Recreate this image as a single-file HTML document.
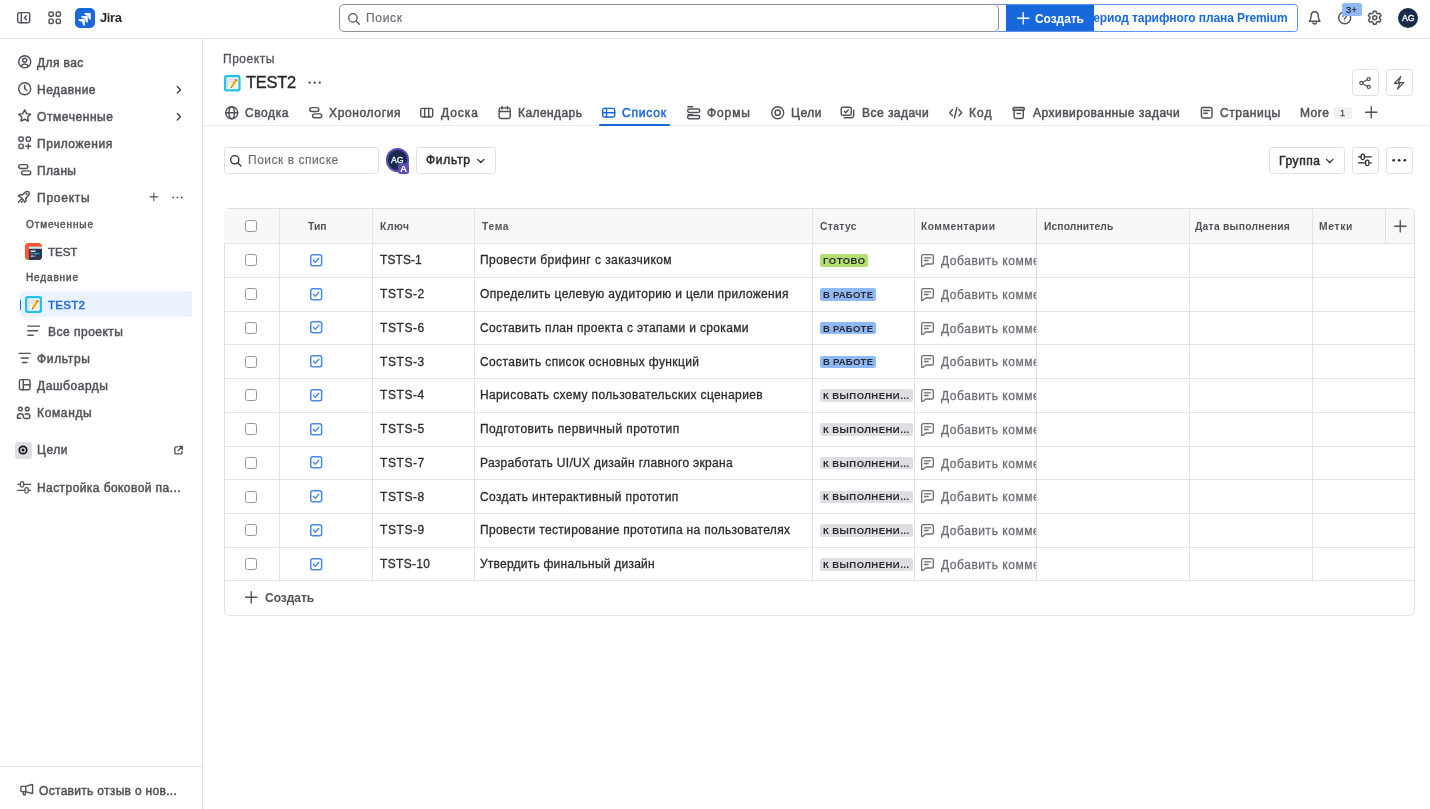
<!DOCTYPE html>
<html lang="ru">
<head>
<meta charset="utf-8">
<title>TEST2 - Список - Jira</title>
<style>
*{box-sizing:border-box;margin:0;padding:0}
html,body{width:1430px;height:809px;overflow:hidden;background:#fff}
body{font-family:"Liberation Sans",sans-serif;font-size:13px;color:#292a2e;position:relative}
svg{display:block;overflow:visible}
.abs{position:absolute}
.t{position:absolute;white-space:nowrap;will-change:transform}
.ic{position:absolute;fill:none;stroke-linecap:round;stroke-linejoin:round}
.btn{position:absolute;border:1px solid #dfe0e3;border-radius:3.5px;background:#fff}
.vl{position:absolute;width:1px;background:#e2e3e5}
.hl{position:absolute;height:1px;background:#e2e3e5}
.cb{position:absolute;width:12px;height:12px;border:1px solid #94979f;border-radius:2.5px;background:#fff}
.st{position:absolute;left:820px;height:12.5px;border-radius:2.5px}
</style>
</head>
<body>

<header class="abs" style="left:0;top:0;width:1430px;height:39px;border-bottom:1px solid #e2e3e5;background:#fff"></header>
<svg class="ic" style="left:16.05px;top:10.05px;stroke:#505258;stroke-width:1.5;" width="15.4" height="15.4" viewBox="0 0 16 16"><rect x="1.75" y="2.75" width="12.5" height="10.5" rx="1.75"/><path d="M5.5 2.75v10.5M10.75 6 8.75 8l2 2"/></svg>
<svg class="ic" style="left:47.05px;top:10.3px;stroke:#505258;stroke-width:1.5;" width="15.4" height="15.4" viewBox="0 0 16 16"><rect x="2" y="2" width="4.5" height="4.5" rx="1.6"/><rect x="9.5" y="2" width="4.5" height="4.5" rx="1.6"/><rect x="2" y="9.5" width="4.5" height="4.5" rx="1.6"/><rect x="9.5" y="9.5" width="4.5" height="4.5" rx="1.6"/></svg>
<svg class="abs" style="left:75px;top:8px" width="20" height="20" viewBox="0 0 24 24"><rect width="24" height="24" rx="6" fill="#1868db"/><path fill="#fff" transform="translate(12 12) scale(1.08) translate(-12 -12)" d="M9.05 15.99H7.81c-1.86 0-3.2-1.14-3.2-2.81h6.64c.340 0 .570.24.570.59v6.68c-1.66 0-2.77-1.34-2.77-3.21zm3.28-3.32h-1.24c-1.86 0-3.2-1.12-3.2-2.79h6.64c.340 0 .590.22.590.57v6.68c-1.66 0-2.79-1.34-2.79-3.21zm3.3-3.29h-1.24c-1.86 0-3.2-1.14-3.2-2.81h6.64c.340 0 .570.24.570.57v6.68c-1.66 0-2.77-1.34-2.77-3.21z"/></svg>
<div class="t" id="t1" style="left:99.5px;top:9px;font-size:13px;line-height:17px;color:#292a2e;font-weight:700;letter-spacing:-0.38px;">Jira</div>
<div class="abs" style="left:994px;top:4px;width:304px;height:27.5px;border:1.5px solid #5a94ef;border-radius:3.5px;background:#fff"></div>
<div class="abs" style="left:998.5px;top:6px;width:289px;height:24px;overflow:hidden"><div class="t" id="t2" style="left:-0.5px;top:4px;font-size:12px;line-height:16px;color:#1868db;font-weight:700;letter-spacing:-0.107px;left:auto;right:0;">Пробный период тарифного плана Premium</div></div>
<div class="abs" style="left:339px;top:4px;width:660px;height:27.5px;border:1px solid #8c8f97;border-radius:5px;background:#fff"></div>
<svg class="ic" style="left:346.65px;top:11.65px;stroke:#505258;stroke-width:1.5;" width="13.5" height="13.5" viewBox="0 0 16 16"><circle cx="7" cy="7" r="5"/><path d="M10.75 10.75 14.5 14.5"/></svg>
<div class="t" id="t3" style="left:365.5px;top:10px;font-size:12px;line-height:16px;color:#6b6e76;letter-spacing:0.684px;-webkit-text-stroke:0.2px #6b6e76;">Поиск</div>
<div class="abs" style="left:1006px;top:4.5px;width:87.5px;height:26.5px;background:#1868db"></div>
<svg class="ic" style="left:1015.75px;top:10.75px;stroke:#fff;stroke-width:1.5;" width="14.5" height="14.5" viewBox="0 0 16 16"><path d="M8 1.75v12.5M1.75 8h12.5"/></svg>
<div class="t" id="t4" style="left:1034.5px;top:11px;font-size:12px;line-height:16px;color:#fff;font-weight:700;letter-spacing:-0.06px;">Создать</div>
<svg class="ic" style="left:1307.1px;top:10.2px;stroke:#505258;stroke-width:1.5;" width="15.4" height="15.4" viewBox="0 0 16 16"><path d="M2.5 11.75c1.25-1.5 1.75-2.5 1.75-5.25C4.25 3.75 5.75 1.75 8 1.75s3.75 2 3.75 4.75c0 2.75.500 3.75 1.75 5.25z"/><path d="M6 13.5l2 1.25 2-1.25"/></svg>
<svg class="ic" style="left:1337.3px;top:9.9px;stroke:#505258;stroke-width:1.5;color:#505258;" width="15.4" height="15.4" viewBox="0 0 16 16"><circle cx="8" cy="8" r="6.25"/><path d="M6.25 6.5c0-1 .750-1.75 1.75-1.75s1.75.700 1.75 1.6c0 1.4-1.75 1.4-1.75 2.9"/><circle cx="8" cy="11.4" r=".600" fill="currentColor" stroke="none"/></svg>
<div class="abs" style="left:1342px;top:3px;width:19.5px;height:12.5px;border-radius:2px;background:#8fb8f6"></div>
<div class="t" id="t5" style="left:1346.1px;top:4px;font-size:9.3px;line-height:12px;color:#292a2e;letter-spacing:0.4px;-webkit-text-stroke:0.28px #292a2e;">3+</div>
<svg class="ic" style="left:1367.3px;top:10.1px;stroke:#505258;stroke-width:1.5;" width="15.4" height="15.4" viewBox="0 0 16 16"><path d="M6.6 1.75h2.8l.450 2 1.35.800 1.95-.620 1.4 2.42-1.5 1.4v1.5l1.5 1.4-1.4 2.42-1.95-.620-1.35.800-.450 2H6.6l-.450-2-1.35-.800-1.95.620-1.4-2.42 1.5-1.4v-1.5l-1.5-1.4 1.4-2.42 1.95.620 1.35-.800z" transform="translate(0,-.5)"/><circle cx="8" cy="8" r="2.1"/></svg>
<div class="abs" style="left:1397.5px;top:7.5px;width:20px;height:20px;border-radius:50%;background:#172b4d"></div>
<div class="t" id="t6" style="left:1401.5px;top:12px;font-size:8.8px;line-height:12px;color:#fff;letter-spacing:-0.1px;-webkit-text-stroke:0.35px #fff;">AG</div>
<nav class="abs" style="left:0;top:39px;width:203px;height:770px;border-right:1px solid #dfe0e2;background:#fff"></nav>
<svg class="ic" style="left:16.5px;top:54.4px;stroke:#505258;stroke-width:1.5;" width="15.4" height="15.4" viewBox="0 0 16 16"><circle cx="8" cy="8" r="6.25"/><circle cx="8" cy="6.5" r="2.1"/><path d="M4.2 12.7c.700-1.5 2.1-2.3 3.8-2.3s3.1.800 3.8 2.3"/></svg>
<div class="t" id="t7" style="left:37px;top:55px;font-size:12px;line-height:16px;color:#505258;letter-spacing:0.404px;-webkit-text-stroke:0.48px #505258;">Для вас</div>
<svg class="ic" style="left:16.5px;top:81.4px;stroke:#505258;stroke-width:1.5;" width="15.4" height="15.4" viewBox="0 0 16 16"><circle cx="8" cy="8" r="6.25"/><path d="M8 4.5V8l2.25 1.75"/></svg>
<div class="t" id="t8" style="left:37px;top:82px;font-size:12px;line-height:16px;color:#505258;letter-spacing:0.48px;-webkit-text-stroke:0.48px #505258;">Недавние</div>
<svg class="ic" style="left:172.75px;top:83.75px;stroke:#3b3d42;stroke-width:1.8;" width="11.5" height="11.5" viewBox="0 0 16 16"><path d="M6 3.5 10.5 8 6 12.5"/></svg>
<svg class="ic" style="left:16.5px;top:108.4px;stroke:#505258;stroke-width:1.5;" width="15.4" height="15.4" viewBox="0 0 16 16"><path d="M8 1.9l1.9 3.95 4.3.600-3.15 3 .780 4.3L8 11.7l-3.83 2.05.780-4.3-3.15-3 4.3-.600z"/></svg>
<div class="t" id="t9" style="left:37px;top:109px;font-size:12px;line-height:16px;color:#505258;letter-spacing:0.573px;-webkit-text-stroke:0.48px #505258;">Отмеченные</div>
<svg class="ic" style="left:172.75px;top:110.75px;stroke:#3b3d42;stroke-width:1.8;" width="11.5" height="11.5" viewBox="0 0 16 16"><path d="M6 3.5 10.5 8 6 12.5"/></svg>
<svg class="ic" style="left:16.5px;top:135.3px;stroke:#505258;stroke-width:1.5;" width="15.4" height="15.4" viewBox="0 0 16 16"><rect x="2" y="2" width="4.5" height="4.5" rx="1.6"/><rect x="9.5" y="2" width="4.5" height="4.5" rx="1.6"/><rect x="2" y="9.5" width="4.5" height="4.5" rx="1.6"/><path d="M11.75 9.25v5M9.25 11.75h5"/></svg>
<div class="t" id="t10" style="left:37px;top:136px;font-size:12px;line-height:16px;color:#505258;letter-spacing:0.553px;-webkit-text-stroke:0.48px #505258;">Приложения</div>
<svg class="ic" style="left:16.5px;top:162.4px;stroke:#505258;stroke-width:1.5;" width="15.4" height="15.4" viewBox="0 0 16 16"><rect x="1.75" y="2.75" width="9.5" height="4" rx="2"/><rect x="4.75" y="9.25" width="9.5" height="4" rx="2"/></svg>
<div class="t" id="t11" style="left:37px;top:163px;font-size:12px;line-height:16px;color:#505258;letter-spacing:0.359px;-webkit-text-stroke:0.48px #505258;">Планы</div>
<div class="t" id="t12" style="left:37px;top:190px;font-size:12px;line-height:16px;color:#505258;letter-spacing:0.757px;-webkit-text-stroke:0.48px #505258;">Проекты</div>
<svg class="ic" style="left:148.9px;top:192.35px;stroke:#505258;stroke-width:1.8;" width="9.7" height="9.7" viewBox="0 0 16 16"><path d="M8 1.75v12.5M1.75 8h12.5"/></svg>
<svg class="ic" style="left:171.3px;top:190.8px;stroke:#505258;stroke-width:0;color:#44464b;" width="12.8" height="12.8" viewBox="0 0 16 16"><circle cx="2.75" cy="8" r="1.15" fill="currentColor" stroke="none"/><circle cx="8" cy="8" r="1.15" fill="currentColor" stroke="none"/><circle cx="13.25" cy="8" r="1.15" fill="currentColor" stroke="none"/></svg>
<div class="t" id="t13" style="left:25.5px;top:218px;font-size:10px;line-height:13px;color:#505258;letter-spacing:0.885px;-webkit-text-stroke:0.42px #505258;">Отмеченные</div>
<svg class="abs" style="left:25.3px;top:242.7px" width="17" height="17" viewBox="0 0 17 17"><rect width="17" height="17" rx="3.5" fill="#ff5630"/><path d="M4 3.5h13v10c0 1.9-1.6 3.5-3.5 3.5H4z" fill="#253858"/><rect x="4" y="3.5" width="13" height="2.3" fill="#dfe1e6"/><rect x="5.5" y="7.5" width="5" height="1.3" fill="#fff"/><rect x="5.5" y="10" width="2.5" height="1.3" fill="#ff5630"/><rect x="8.8" y="10" width="5.5" height="1.3" fill="#00b8d9"/><rect x="5.5" y="12.5" width="3.5" height="1.3" fill="#c1c7d0"/><rect x="9.8" y="12.5" width="1.5" height="1.3" fill="#ff5630"/></svg>
<div class="t" id="t14" style="left:47.8px;top:245px;font-size:11.6px;line-height:14px;color:#505258;letter-spacing:-0.08px;-webkit-text-stroke:0.48px #505258;">TEST</div>
<div class="t" id="t15" style="left:25.5px;top:271px;font-size:10px;line-height:13px;color:#505258;letter-spacing:0.864px;-webkit-text-stroke:0.42px #505258;">Недавние</div>
<div class="abs" style="left:20.3px;top:290.8px;width:171.4px;height:26.7px;border-radius:3.5px;background:#e9f2fe"></div>
<div class="abs" style="left:20.3px;top:299.5px;width:1.2px;height:10.5px;border-radius:1px;background:#1868db"></div>
<svg class="abs" style="left:25.4px;top:295.8px" width="17" height="17" viewBox="0 0 17 17"><rect width="17" height="17" rx="2.5" fill="#22c3e6"/><rect x="2.3" y="2.3" width="12.4" height="12.4" rx=".8" fill="#f4f5f7"/><path d="M4 3.2v10.6" stroke="#a5adba" stroke-width="1" stroke-dasharray="1 1"/><path d="M5.5 4.5h5M5.5 6.5h4" stroke="#c1c7d0" stroke-width=".8"/><path d="M11.8 3.8l2 1.3-4.6 7.2-2.4 1.3.400-2.6z" fill="#ffab00"/><path d="M11.8 3.8l2 1.3-.9 1.4-2-1.3z" fill="#ff5630"/><path d="M6.8 13.6l.250-1.5 1.1.700z" fill="#253858"/></svg>
<div class="t" id="t16" style="left:47.8px;top:298px;font-size:11.6px;line-height:14px;color:#1868db;letter-spacing:0.205px;-webkit-text-stroke:0.48px #1868db;">TEST2</div>
<svg class="ic" style="left:25.9px;top:322.8px;stroke:#505258;stroke-width:1.5;" width="15.4" height="15.4" viewBox="0 0 16 16"><path d="M2 3.25h12M2 8h10M2 12.75h5.5"/></svg>
<div class="t" id="t17" style="left:47.5px;top:324px;font-size:12px;line-height:16px;color:#505258;letter-spacing:0.495px;-webkit-text-stroke:0.48px #505258;">Все проекты</div>
<svg class="ic" style="left:16.5px;top:350.3px;stroke:#505258;stroke-width:1.5;" width="15.4" height="15.4" viewBox="0 0 16 16"><path d="M2.25 3.5h11.5M4.25 8.25h7.5M5.75 13h4.5"/></svg>
<div class="t" id="t18" style="left:37px;top:351px;font-size:12px;line-height:16px;color:#505258;letter-spacing:0.677px;-webkit-text-stroke:0.48px #505258;">Фильтры</div>
<svg class="ic" style="left:16.5px;top:377.4px;stroke:#505258;stroke-width:1.5;" width="15.4" height="15.4" viewBox="0 0 16 16"><rect x="2.5" y="2.75" width="11" height="10.5" rx="1.75"/><path d="M6.5 2.75v10.5M6.5 8h7"/></svg>
<div class="t" id="t19" style="left:37px;top:378px;font-size:12px;line-height:16px;color:#505258;letter-spacing:0.539px;-webkit-text-stroke:0.48px #505258;">Дашбоарды</div>
<svg class="ic" style="left:16.4px;top:405px;stroke:#505258;stroke-width:1.5;" width="15.4" height="15.4" viewBox="0 0 16 16"><circle cx="4.5" cy="4.2" r="1.9"/><circle cx="11.7" cy="4.2" r="1.9"/><path d="M1.5 13.75v-1.5c0-1.7 1.4-3.1 3.1-3.1s3.1 1.4 3.1 3.1c0 1 .800 1.75 1.75 1.75h3.3c1 0 1.75-.800 1.75-1.75 0-1.7-1.4-3.1-3.1-3.1-.700 0-1.3.200-1.8.600M1.5 13.75h3.5"/></svg>
<div class="t" id="t20" style="left:37px;top:405px;font-size:12px;line-height:16px;color:#505258;letter-spacing:0.643px;-webkit-text-stroke:0.48px #505258;">Команды</div>
<div class="abs" style="left:15px;top:442.2px;width:16.7px;height:16.5px;border-radius:3.5px;background:#dddee1"></div>
<svg class="abs" style="left:18.3px;top:445.4px" width="10" height="10" viewBox="0 0 10 10"><circle cx="5" cy="5" r="3.7" fill="none" stroke="#101214" stroke-width="1.7"/><circle cx="5" cy="5" r="1.5" fill="#101214"/></svg>
<div class="t" id="t21" style="left:37px;top:442px;font-size:12px;line-height:16px;color:#505258;letter-spacing:0.547px;-webkit-text-stroke:0.48px #505258;">Цели</div>
<svg class="ic" style="left:172.85px;top:444.7px;stroke:#505258;stroke-width:2;" width="10.8" height="10.8" viewBox="0 0 16 16"><path d="M7 2.75H4.25c-.830 0-1.5.670-1.5 1.5v7.5c0 .830.67 1.5 1.5 1.5h7.5c.830 0 1.5-.670 1.5-1.5V9M9.5 2.25h4.25V6.5M13.5 2.5 7.75 8.25"/></svg>
<div class="t" id="t22" style="left:37px;top:480px;font-size:12px;line-height:16px;color:#505258;letter-spacing:0.425px;-webkit-text-stroke:0.48px #505258;">Настройка боковой па...</div>
<div class="hl" style="left:0;top:766px;width:202px"></div>
<div class="t" id="t23" style="left:38.9px;top:783px;font-size:12px;line-height:16px;color:#505258;letter-spacing:0.311px;-webkit-text-stroke:0.48px #505258;">Оставить отзыв о нов...</div>
<div class="t" id="t24" style="left:223.2px;top:51px;font-size:12px;line-height:16px;color:#505258;letter-spacing:0.524px;-webkit-text-stroke:0.28px #505258;">Проекты</div>
<svg class="abs" style="left:223.7px;top:74.5px" width="16.6" height="16.6" viewBox="0 0 17 17"><rect width="17" height="17" rx="2.5" fill="#22c3e6"/><rect x="2.3" y="2.3" width="12.4" height="12.4" rx=".8" fill="#f4f5f7"/><path d="M4 3.2v10.6" stroke="#a5adba" stroke-width="1" stroke-dasharray="1 1"/><path d="M5.5 4.5h5M5.5 6.5h4" stroke="#c1c7d0" stroke-width=".8"/><path d="M11.8 3.8l2 1.3-4.6 7.2-2.4 1.3.400-2.6z" fill="#ffab00"/><path d="M11.8 3.8l2 1.3-.9 1.4-2-1.3z" fill="#ff5630"/><path d="M6.8 13.6l.250-1.5 1.1.700z" fill="#253858"/></svg>
<div class="t" id="t25" style="left:246.2px;top:72px;font-size:16.4px;line-height:20px;color:#292a2e;letter-spacing:-0.229px;-webkit-text-stroke:0.4px #292a2e;">TEST2</div>
<svg class="ic" style="left:307.05px;top:74.8px;stroke:#505258;stroke-width:0;color:#3b3d42;" width="15.4" height="15.4" viewBox="0 0 16 16"><circle cx="2.75" cy="8" r="1.15" fill="currentColor" stroke="none"/><circle cx="8" cy="8" r="1.15" fill="currentColor" stroke="none"/><circle cx="13.25" cy="8" r="1.15" fill="currentColor" stroke="none"/></svg>
<div class="btn" style="left:1352px;top:69.3px;width:26.7px;height:26.5px"></div>
<svg class="ic" style="left:1358px;top:75.8px;stroke:#505258;stroke-width:1.4;" width="14" height="14" viewBox="0 0 16 16"><circle cx="3.75" cy="8" r="1.75"/><circle cx="12.25" cy="3.5" r="1.75"/><circle cx="12.25" cy="12.5" r="1.75"/><path d="M5.3 7.15 10.7 4.3M5.3 8.85l5.4 2.85"/></svg>
<div class="btn" style="left:1385.8px;top:69.3px;width:27px;height:26.5px"></div>
<div class="hl" style="left:203px;top:125px;width:1227px;background:#ebecee"></div>
<svg class="ic" style="left:224.35px;top:104.6px;stroke:#505258;stroke-width:1.5;" width="15.4" height="15.4" viewBox="0 0 16 16"><circle cx="8" cy="8" r="6.25"/><path d="M1.75 8h12.5"/><ellipse cx="8" cy="8" rx="2.75" ry="6.25"/></svg>
<div class="t" id="t26" style="left:245px;top:105px;font-size:12px;line-height:16px;color:#505258;letter-spacing:0.597px;-webkit-text-stroke:0.48px #505258;">Сводка</div>
<svg class="ic" style="left:307.95px;top:104.8px;stroke:#505258;stroke-width:1.5;" width="15.4" height="15.4" viewBox="0 0 16 16"><rect x="1.75" y="2.75" width="9.5" height="4" rx="2"/><rect x="4.75" y="9.25" width="9.5" height="4" rx="2"/></svg>
<div class="t" id="t27" style="left:329px;top:105px;font-size:12px;line-height:16px;color:#505258;letter-spacing:0.635px;-webkit-text-stroke:0.48px #505258;">Хронология</div>
<svg class="ic" style="left:419.4px;top:105.05px;stroke:#505258;stroke-width:1.5;" width="15.4" height="15.4" viewBox="0 0 16 16"><rect x="1.75" y="3.5" width="12.5" height="9" rx="1.75"/><path d="M5.9 3.5v9M10.1 3.5v9"/></svg>
<div class="t" id="t28" style="left:440.7px;top:105px;font-size:12px;line-height:16px;color:#505258;letter-spacing:0.919px;-webkit-text-stroke:0.48px #505258;">Доска</div>
<svg class="ic" style="left:496.8px;top:104.5px;stroke:#505258;stroke-width:1.5;" width="15.4" height="15.4" viewBox="0 0 16 16"><rect x="2.25" y="3" width="11.5" height="11" rx="1.75"/><path d="M2.25 6.75h11.5M5.25 1.5v2.75M10.75 1.5v2.75"/></svg>
<div class="t" id="t29" style="left:517.8px;top:105px;font-size:12px;line-height:16px;color:#505258;letter-spacing:0.415px;-webkit-text-stroke:0.48px #505258;">Календарь</div>
<svg class="ic" style="left:601.4px;top:105.05px;stroke:#1868db;stroke-width:1.5;" width="15.4" height="15.4" viewBox="0 0 16 16"><rect x="1.75" y="3.5" width="12.5" height="9" rx="1.75"/><path d="M1.75 8h12.5M5.75 3.5v9"/></svg>
<div class="t" id="t30" style="left:622.3px;top:105px;font-size:12px;line-height:16px;color:#1868db;letter-spacing:0.812px;-webkit-text-stroke:0.48px #1868db;">Список</div>
<div class="abs" style="left:598.7px;top:123.8px;width:71.3px;height:2.2px;border-radius:1px;background:#1868db"></div>
<svg class="ic" style="left:686.3px;top:104.5px;stroke:#505258;stroke-width:1.5;" width="15.4" height="15.4" viewBox="0 0 16 16"><path d="M2 1.75h5"/><rect x="1.75" y="4.25" width="12.5" height="3.5" rx="1.5"/><path d="M2 10h5"/><rect x="1.75" y="11.25" width="12.5" height="3.5" rx="1.5" transform="translate(0,-.4)"/></svg>
<div class="t" id="t31" style="left:707px;top:105px;font-size:12px;line-height:16px;color:#505258;letter-spacing:0.91px;-webkit-text-stroke:0.48px #505258;">Формы</div>
<svg class="ic" style="left:769.8px;top:104.6px;stroke:#505258;stroke-width:1.5;" width="15.4" height="15.4" viewBox="0 0 16 16"><circle cx="8" cy="8" r="6.25"/><circle cx="8" cy="8" r="2.75"/></svg>
<div class="t" id="t32" style="left:790.5px;top:105px;font-size:12px;line-height:16px;color:#505258;letter-spacing:0.547px;-webkit-text-stroke:0.48px #505258;">Цели</div>
<svg class="ic" style="left:840.4px;top:105.1px;stroke:#505258;stroke-width:1.5;" width="15.4" height="15.4" viewBox="0 0 16 16"><rect x="1.25" y="2.25" width="10.5" height="8.5" rx="1.75"/><path d="M4.5 6.5 6 8l2.75-3M4.25 13.25h7.5c1.4 0 2.5-1.1 2.5-2.5V5.5"/></svg>
<div class="t" id="t33" style="left:862px;top:105px;font-size:12px;line-height:16px;color:#505258;letter-spacing:0.471px;-webkit-text-stroke:0.48px #505258;">Все задачи</div>
<svg class="ic" style="left:948.1px;top:105.1px;stroke:#505258;stroke-width:1.5;" width="15.4" height="15.4" viewBox="0 0 16 16"><path d="M4.75 4.75 1.75 8l3 3.25M11.25 4.75l3 3.25-3 3.25M9.25 2.5l-2.5 11"/></svg>
<div class="t" id="t34" style="left:969.2px;top:105px;font-size:12px;line-height:16px;color:#505258;letter-spacing:1.047px;-webkit-text-stroke:0.48px #505258;">Код</div>
<svg class="ic" style="left:1010.6px;top:104.5px;stroke:#505258;stroke-width:1.5;" width="15.4" height="15.4" viewBox="0 0 16 16"><rect x="2.25" y="2.5" width="11.5" height="3" rx=".9" fill="#c9cbd0"/><path d="M3.25 5.5v7c0 .830.67 1.5 1.5 1.5h6.5c.830 0 1.5-.670 1.5-1.5v-7M6.25 8.75h3.5"/></svg>
<div class="t" id="t35" style="left:1032.5px;top:105px;font-size:12px;line-height:16px;color:#505258;letter-spacing:0.489px;-webkit-text-stroke:0.48px #505258;">Архивированные задачи</div>
<svg class="ic" style="left:1198.6px;top:104.8px;stroke:#505258;stroke-width:1.5;" width="15.4" height="15.4" viewBox="0 0 16 16"><rect x="2.5" y="2.5" width="11" height="11" rx="1.75"/><path d="M5 5.75h6M5 8.5h3.5"/></svg>
<div class="t" id="t36" style="left:1219.8px;top:105px;font-size:12px;line-height:16px;color:#505258;letter-spacing:0.551px;-webkit-text-stroke:0.48px #505258;">Страницы</div>
<div class="t" id="t37" style="left:1300.3px;top:105px;font-size:12px;line-height:16px;color:#505258;letter-spacing:0.519px;-webkit-text-stroke:0.48px #505258;">More</div>
<div class="abs" style="left:1333.2px;top:107.2px;width:19.3px;height:11.6px;border-radius:2px;background:#f0f1f2"></div>
<div class="t" id="t38" style="left:1340.3px;top:107px;font-size:9px;line-height:12px;color:#505258;letter-spacing:-0.216px;-webkit-text-stroke:0.28px #505258;">1</div>
<svg class="ic" style="left:1364.15px;top:105.45px;stroke:#505258;stroke-width:1.5;" width="14.5" height="14.5" viewBox="0 0 16 16"><path d="M8 1.75v12.5M1.75 8h12.5"/></svg>
<div class="btn" style="left:223.5px;top:147px;width:155.5px;height:26.5px;border-radius:3.5px"></div>
<svg class="ic" style="left:229.1px;top:153.6px;stroke:#292a2e;stroke-width:1.6;" width="13.2" height="13.2" viewBox="0 0 16 16"><circle cx="7" cy="7" r="5"/><path d="M10.75 10.75 14.5 14.5"/></svg>
<div class="t" id="t39" style="left:247.8px;top:152px;font-size:12px;line-height:16px;color:#6b6e76;letter-spacing:0.511px;-webkit-text-stroke:0.15px #6b6e76;">Поиск в списке</div>
<div class="abs" style="left:385.8px;top:148.4px;width:23.5px;height:23.5px;border-radius:50%;background:#172b4d;border:2.2px solid #5e4db2"></div>
<div class="t" id="t40" style="left:391.4px;top:154px;font-size:8.8px;line-height:12px;color:#fff;letter-spacing:-0.2px;-webkit-text-stroke:0.3px #fff;">AG</div>
<div class="abs" style="left:398px;top:162.5px;width:11.3px;height:11.3px;border-radius:2.2px;background:#5e4db2"></div>
<div class="t" id="t41" style="left:400px;top:162px;font-size:9.8px;line-height:13px;color:#fff;font-weight:700;">A</div>
<div class="btn" style="left:416.4px;top:147px;width:79.5px;height:26.5px"></div>
<div class="t" id="t42" style="left:426.2px;top:152px;font-size:12px;line-height:16px;color:#292a2e;letter-spacing:0.738px;-webkit-text-stroke:0.48px #292a2e;">Фильтр</div>
<svg class="ic" style="left:475.25px;top:154.85px;stroke:#292a2e;stroke-width:1.7;" width="11.5" height="11.5" viewBox="0 0 16 16"><path d="M3.5 6 8 10.5 12.5 6"/></svg>
<div class="btn" style="left:1268.6px;top:146.8px;width:76px;height:27px"></div>
<div class="t" id="t43" style="left:1278.5px;top:153px;font-size:12px;line-height:16px;color:#292a2e;letter-spacing:0.591px;-webkit-text-stroke:0.48px #292a2e;">Группа</div>
<svg class="ic" style="left:1324.25px;top:154.85px;stroke:#292a2e;stroke-width:1.7;" width="11.5" height="11.5" viewBox="0 0 16 16"><path d="M3.5 6 8 10.5 12.5 6"/></svg>
<div class="btn" style="left:1352px;top:146.8px;width:26.7px;height:27px"></div>
<div class="btn" style="left:1385.8px;top:146.8px;width:27px;height:27px"></div>
<div class="abs" style="left:223.5px;top:208px;width:1191px;height:408px;border:1px solid #dfe0e2;border-radius:6px;background:#fff"></div>
<div class="abs" style="left:224px;top:209px;width:1190px;height:34px;border-radius:5px 5px 0 0;background:#f8f8f8"></div>
<div class="hl" style="left:224px;top:243px;width:1190px"></div>
<div class="hl" style="left:224px;top:277px;width:1190px"></div>
<div class="hl" style="left:224px;top:311px;width:1190px"></div>
<div class="hl" style="left:224px;top:344px;width:1190px"></div>
<div class="hl" style="left:224px;top:378px;width:1190px"></div>
<div class="hl" style="left:224px;top:412px;width:1190px"></div>
<div class="hl" style="left:224px;top:446px;width:1190px"></div>
<div class="hl" style="left:224px;top:479px;width:1190px"></div>
<div class="hl" style="left:224px;top:513px;width:1190px"></div>
<div class="hl" style="left:224px;top:547px;width:1190px"></div>
<div class="hl" style="left:224px;top:580px;width:1190px"></div>
<div class="vl" style="left:279px;top:209px;height:372px"></div>
<div class="vl" style="left:372px;top:209px;height:372px"></div>
<div class="vl" style="left:474px;top:209px;height:372px"></div>
<div class="vl" style="left:812px;top:209px;height:372px"></div>
<div class="vl" style="left:913.5px;top:209px;height:372px"></div>
<div class="vl" style="left:1188.5px;top:209px;height:372px"></div>
<div class="vl" style="left:1311.5px;top:209px;height:372px"></div>
<div class="vl" style="left:1036px;top:209px;height:372px;background:#dcdde0"></div>
<div class="vl" style="left:1385px;top:209px;height:34px"></div>
<div class="cb" style="left:245px;top:220px"></div>
<div class="t" id="t44" style="left:307.5px;top:220px;font-size:10.3px;line-height:13px;color:#505258;font-weight:700;letter-spacing:0.023px;">Тип</div>
<div class="t" id="t45" style="left:379.5px;top:220px;font-size:10.3px;line-height:13px;color:#505258;font-weight:700;letter-spacing:0.594px;">Ключ</div>
<div class="t" id="t46" style="left:481.5px;top:220px;font-size:10.3px;line-height:13px;color:#505258;font-weight:700;letter-spacing:0.674px;">Тема</div>
<div class="t" id="t47" style="left:819.5px;top:220px;font-size:10.3px;line-height:13px;color:#505258;font-weight:700;letter-spacing:0.379px;">Статус</div>
<div class="t" id="t48" style="left:920.5px;top:220px;font-size:10.3px;line-height:13px;color:#505258;font-weight:700;letter-spacing:0.466px;">Комментарии</div>
<div class="t" id="t49" style="left:1044px;top:220px;font-size:10.3px;line-height:13px;color:#505258;font-weight:700;letter-spacing:0.117px;">Исполнитель</div>
<div class="t" id="t50" style="left:1195.1px;top:220px;font-size:10.3px;line-height:13px;color:#505258;font-weight:700;letter-spacing:0.263px;">Дата выполнения</div>
<div class="t" id="t51" style="left:1318.5px;top:220px;font-size:10.3px;line-height:13px;color:#505258;font-weight:700;letter-spacing:0.674px;">Метки</div>
<svg class="ic" style="left:1392.75px;top:218.75px;stroke:#505258;stroke-width:1.5;" width="14.5" height="14.5" viewBox="0 0 16 16"><path d="M8 1.75v12.5M1.75 8h12.5"/></svg>
<div class="cb" style="left:245px;top:254.4px"></div>
<svg class="abs" style="left:310.3px;top:253.9px" width="12.4" height="12.4" viewBox="0 0 12.4 12.4"><rect x=".75" y=".75" width="10.9" height="10.9" rx="2" fill="#fff" stroke="#4688ec" stroke-width="1.5"/><path d="M3.4 6.3l1.9 1.9 3.6-4" fill="none" stroke="#4688ec" stroke-width="1.3" stroke-linecap="round" stroke-linejoin="round"/></svg>
<div class="t" id="t52" style="left:379.5px;top:252px;font-size:12px;line-height:16px;color:#292a2e;letter-spacing:0.091px;-webkit-text-stroke:0.28px #292a2e;">TSTS-1</div>
<div class="t" id="t53" style="left:479.5px;top:252px;font-size:12px;line-height:16px;color:#292a2e;letter-spacing:0.432px;-webkit-text-stroke:0.28px #292a2e;">Провести брифинг с заказчиком</div>
<div class="st" style="top:254.3px;width:48.3px;background:#b3df72"></div>
<div class="t" id="t54" style="left:823px;top:254px;font-size:9.5px;line-height:13px;color:#292a2e;font-weight:700;letter-spacing:0.495px;">ГОТОВО</div>
<svg class="ic" style="left:920.4px;top:253.1px;stroke:#6b6e76;stroke-width:1.4;" width="15" height="15" viewBox="0 0 16 16"><path d="M3.5 1.75h9c1 0 1.75.750 1.75 1.75v6.5c0 1-.750 1.75-1.75 1.75H6.25l-3 2.5-1.5 0V3.5c0-1 .750-1.75 1.75-1.75z"/><path d="M4.75 5.25h6.5M4.75 8h4"/></svg>
<div class="abs" style="left:938px;top:249px;width:98px;height:24px;overflow:hidden"><div class="t" id="t55" style="left:2.9px;top:4px;font-size:12px;line-height:16px;color:#6b6e76;letter-spacing:0.55px;-webkit-text-stroke:0.28px #6b6e76;">Добавить комментарий</div></div>
<div class="cb" style="left:245px;top:288.1px"></div>
<svg class="abs" style="left:310.3px;top:287.6px" width="12.4" height="12.4" viewBox="0 0 12.4 12.4"><rect x=".75" y=".75" width="10.9" height="10.9" rx="2" fill="#fff" stroke="#4688ec" stroke-width="1.5"/><path d="M3.4 6.3l1.9 1.9 3.6-4" fill="none" stroke="#4688ec" stroke-width="1.3" stroke-linecap="round" stroke-linejoin="round"/></svg>
<div class="t" id="t56" style="left:379.5px;top:286px;font-size:12px;line-height:16px;color:#292a2e;letter-spacing:0.571px;-webkit-text-stroke:0.28px #292a2e;">TSTS-2</div>
<div class="t" id="t57" style="left:479.5px;top:286px;font-size:12px;line-height:16px;color:#292a2e;letter-spacing:0.327px;-webkit-text-stroke:0.28px #292a2e;">Определить целевую аудиторию и цели приложения</div>
<div class="st" style="top:288.1px;width:56.3px;background:#8fb8f6"></div>
<div class="t" id="t58" style="left:823px;top:288px;font-size:9.5px;line-height:13px;color:#292a2e;font-weight:700;letter-spacing:0.252px;">В РАБОТЕ</div>
<svg class="ic" style="left:920.4px;top:286.85px;stroke:#6b6e76;stroke-width:1.4;" width="15" height="15" viewBox="0 0 16 16"><path d="M3.5 1.75h9c1 0 1.75.750 1.75 1.75v6.5c0 1-.750 1.75-1.75 1.75H6.25l-3 2.5-1.5 0V3.5c0-1 .750-1.75 1.75-1.75z"/><path d="M4.75 5.25h6.5M4.75 8h4"/></svg>
<div class="abs" style="left:938px;top:282.8px;width:98px;height:24px;overflow:hidden"><div class="t" id="t59" style="left:2.9px;top:4px;font-size:12px;line-height:16px;color:#6b6e76;letter-spacing:0.55px;-webkit-text-stroke:0.28px #6b6e76;">Добавить комментарий</div></div>
<div class="cb" style="left:245px;top:321.9px"></div>
<svg class="abs" style="left:310.3px;top:321.4px" width="12.4" height="12.4" viewBox="0 0 12.4 12.4"><rect x=".75" y=".75" width="10.9" height="10.9" rx="2" fill="#fff" stroke="#4688ec" stroke-width="1.5"/><path d="M3.4 6.3l1.9 1.9 3.6-4" fill="none" stroke="#4688ec" stroke-width="1.3" stroke-linecap="round" stroke-linejoin="round"/></svg>
<div class="t" id="t60" style="left:379.5px;top:320px;font-size:12px;line-height:16px;color:#292a2e;letter-spacing:0.571px;-webkit-text-stroke:0.28px #292a2e;">TSTS-6</div>
<div class="t" id="t61" style="left:479.5px;top:320px;font-size:12px;line-height:16px;color:#292a2e;letter-spacing:0.35px;-webkit-text-stroke:0.28px #292a2e;">Составить план проекта с этапами и сроками</div>
<div class="st" style="top:321.8px;width:56.3px;background:#8fb8f6"></div>
<div class="t" id="t62" style="left:823px;top:322px;font-size:9.5px;line-height:13px;color:#292a2e;font-weight:700;letter-spacing:0.252px;">В РАБОТЕ</div>
<svg class="ic" style="left:920.4px;top:320.6px;stroke:#6b6e76;stroke-width:1.4;" width="15" height="15" viewBox="0 0 16 16"><path d="M3.5 1.75h9c1 0 1.75.750 1.75 1.75v6.5c0 1-.750 1.75-1.75 1.75H6.25l-3 2.5-1.5 0V3.5c0-1 .750-1.75 1.75-1.75z"/><path d="M4.75 5.25h6.5M4.75 8h4"/></svg>
<div class="abs" style="left:938px;top:316.5px;width:98px;height:24px;overflow:hidden"><div class="t" id="t63" style="left:2.9px;top:4px;font-size:12px;line-height:16px;color:#6b6e76;letter-spacing:0.55px;-webkit-text-stroke:0.28px #6b6e76;">Добавить комментарий</div></div>
<div class="cb" style="left:245px;top:355.6px"></div>
<svg class="abs" style="left:310.3px;top:355.1px" width="12.4" height="12.4" viewBox="0 0 12.4 12.4"><rect x=".75" y=".75" width="10.9" height="10.9" rx="2" fill="#fff" stroke="#4688ec" stroke-width="1.5"/><path d="M3.4 6.3l1.9 1.9 3.6-4" fill="none" stroke="#4688ec" stroke-width="1.3" stroke-linecap="round" stroke-linejoin="round"/></svg>
<div class="t" id="t64" style="left:379.5px;top:354px;font-size:12px;line-height:16px;color:#292a2e;letter-spacing:0.571px;-webkit-text-stroke:0.28px #292a2e;">TSTS-3</div>
<div class="t" id="t65" style="left:479.5px;top:354px;font-size:12px;line-height:16px;color:#292a2e;letter-spacing:0.376px;-webkit-text-stroke:0.28px #292a2e;">Составить список основных функций</div>
<div class="st" style="top:355.6px;width:56.3px;background:#8fb8f6"></div>
<div class="t" id="t66" style="left:823px;top:355px;font-size:9.5px;line-height:13px;color:#292a2e;font-weight:700;letter-spacing:0.252px;">В РАБОТЕ</div>
<svg class="ic" style="left:920.4px;top:354.35px;stroke:#6b6e76;stroke-width:1.4;" width="15" height="15" viewBox="0 0 16 16"><path d="M3.5 1.75h9c1 0 1.75.750 1.75 1.75v6.5c0 1-.750 1.75-1.75 1.75H6.25l-3 2.5-1.5 0V3.5c0-1 .750-1.75 1.75-1.75z"/><path d="M4.75 5.25h6.5M4.75 8h4"/></svg>
<div class="abs" style="left:938px;top:350.2px;width:98px;height:24px;overflow:hidden"><div class="t" id="t67" style="left:2.9px;top:4px;font-size:12px;line-height:16px;color:#6b6e76;letter-spacing:0.55px;-webkit-text-stroke:0.28px #6b6e76;">Добавить комментарий</div></div>
<div class="cb" style="left:245px;top:389.4px"></div>
<svg class="abs" style="left:310.3px;top:388.9px" width="12.4" height="12.4" viewBox="0 0 12.4 12.4"><rect x=".75" y=".75" width="10.9" height="10.9" rx="2" fill="#fff" stroke="#4688ec" stroke-width="1.5"/><path d="M3.4 6.3l1.9 1.9 3.6-4" fill="none" stroke="#4688ec" stroke-width="1.3" stroke-linecap="round" stroke-linejoin="round"/></svg>
<div class="t" id="t68" style="left:379.5px;top:387px;font-size:12px;line-height:16px;color:#292a2e;letter-spacing:0.571px;-webkit-text-stroke:0.28px #292a2e;">TSTS-4</div>
<div class="t" id="t69" style="left:479.5px;top:387px;font-size:12px;line-height:16px;color:#292a2e;letter-spacing:0.355px;-webkit-text-stroke:0.28px #292a2e;">Нарисовать схему пользовательских сценариев</div>
<div class="st" style="top:389.3px;width:92.8px;background:#dddee1"></div>
<div class="t" id="t70" style="left:823px;top:389px;font-size:9.5px;line-height:13px;color:#292a2e;font-weight:700;letter-spacing:0.442px;">К ВЫПОЛНЕНИ…</div>
<svg class="ic" style="left:920.4px;top:388.1px;stroke:#6b6e76;stroke-width:1.4;" width="15" height="15" viewBox="0 0 16 16"><path d="M3.5 1.75h9c1 0 1.75.750 1.75 1.75v6.5c0 1-.750 1.75-1.75 1.75H6.25l-3 2.5-1.5 0V3.5c0-1 .750-1.75 1.75-1.75z"/><path d="M4.75 5.25h6.5M4.75 8h4"/></svg>
<div class="abs" style="left:938px;top:384px;width:98px;height:24px;overflow:hidden"><div class="t" id="t71" style="left:2.9px;top:4px;font-size:12px;line-height:16px;color:#6b6e76;letter-spacing:0.55px;-webkit-text-stroke:0.28px #6b6e76;">Добавить комментарий</div></div>
<div class="cb" style="left:245px;top:423.1px"></div>
<svg class="abs" style="left:310.3px;top:422.6px" width="12.4" height="12.4" viewBox="0 0 12.4 12.4"><rect x=".75" y=".75" width="10.9" height="10.9" rx="2" fill="#fff" stroke="#4688ec" stroke-width="1.5"/><path d="M3.4 6.3l1.9 1.9 3.6-4" fill="none" stroke="#4688ec" stroke-width="1.3" stroke-linecap="round" stroke-linejoin="round"/></svg>
<div class="t" id="t72" style="left:379.5px;top:421px;font-size:12px;line-height:16px;color:#292a2e;letter-spacing:0.571px;-webkit-text-stroke:0.28px #292a2e;">TSTS-5</div>
<div class="t" id="t73" style="left:479.5px;top:421px;font-size:12px;line-height:16px;color:#292a2e;letter-spacing:0.411px;-webkit-text-stroke:0.28px #292a2e;">Подготовить первичный прототип</div>
<div class="st" style="top:423.1px;width:92.8px;background:#dddee1"></div>
<div class="t" id="t74" style="left:823px;top:423px;font-size:9.5px;line-height:13px;color:#292a2e;font-weight:700;letter-spacing:0.442px;">К ВЫПОЛНЕНИ…</div>
<svg class="ic" style="left:920.4px;top:421.85px;stroke:#6b6e76;stroke-width:1.4;" width="15" height="15" viewBox="0 0 16 16"><path d="M3.5 1.75h9c1 0 1.75.750 1.75 1.75v6.5c0 1-.750 1.75-1.75 1.75H6.25l-3 2.5-1.5 0V3.5c0-1 .750-1.75 1.75-1.75z"/><path d="M4.75 5.25h6.5M4.75 8h4"/></svg>
<div class="abs" style="left:938px;top:417.8px;width:98px;height:24px;overflow:hidden"><div class="t" id="t75" style="left:2.9px;top:4px;font-size:12px;line-height:16px;color:#6b6e76;letter-spacing:0.55px;-webkit-text-stroke:0.28px #6b6e76;">Добавить комментарий</div></div>
<div class="cb" style="left:245px;top:456.9px"></div>
<svg class="abs" style="left:310.3px;top:456.4px" width="12.4" height="12.4" viewBox="0 0 12.4 12.4"><rect x=".75" y=".75" width="10.9" height="10.9" rx="2" fill="#fff" stroke="#4688ec" stroke-width="1.5"/><path d="M3.4 6.3l1.9 1.9 3.6-4" fill="none" stroke="#4688ec" stroke-width="1.3" stroke-linecap="round" stroke-linejoin="round"/></svg>
<div class="t" id="t76" style="left:379.5px;top:455px;font-size:12px;line-height:16px;color:#292a2e;letter-spacing:0.571px;-webkit-text-stroke:0.28px #292a2e;">TSTS-7</div>
<div class="t" id="t77" style="left:479.5px;top:455px;font-size:12px;line-height:16px;color:#292a2e;letter-spacing:0.307px;-webkit-text-stroke:0.28px #292a2e;">Разработать UI/UX дизайн главного экрана</div>
<div class="st" style="top:456.8px;width:92.8px;background:#dddee1"></div>
<div class="t" id="t78" style="left:823px;top:457px;font-size:9.5px;line-height:13px;color:#292a2e;font-weight:700;letter-spacing:0.442px;">К ВЫПОЛНЕНИ…</div>
<svg class="ic" style="left:920.4px;top:455.6px;stroke:#6b6e76;stroke-width:1.4;" width="15" height="15" viewBox="0 0 16 16"><path d="M3.5 1.75h9c1 0 1.75.750 1.75 1.75v6.5c0 1-.750 1.75-1.75 1.75H6.25l-3 2.5-1.5 0V3.5c0-1 .750-1.75 1.75-1.75z"/><path d="M4.75 5.25h6.5M4.75 8h4"/></svg>
<div class="abs" style="left:938px;top:451.5px;width:98px;height:24px;overflow:hidden"><div class="t" id="t79" style="left:2.9px;top:4px;font-size:12px;line-height:16px;color:#6b6e76;letter-spacing:0.55px;-webkit-text-stroke:0.28px #6b6e76;">Добавить комментарий</div></div>
<div class="cb" style="left:245px;top:490.6px"></div>
<svg class="abs" style="left:310.3px;top:490.1px" width="12.4" height="12.4" viewBox="0 0 12.4 12.4"><rect x=".75" y=".75" width="10.9" height="10.9" rx="2" fill="#fff" stroke="#4688ec" stroke-width="1.5"/><path d="M3.4 6.3l1.9 1.9 3.6-4" fill="none" stroke="#4688ec" stroke-width="1.3" stroke-linecap="round" stroke-linejoin="round"/></svg>
<div class="t" id="t80" style="left:379.5px;top:489px;font-size:12px;line-height:16px;color:#292a2e;letter-spacing:0.571px;-webkit-text-stroke:0.28px #292a2e;">TSTS-8</div>
<div class="t" id="t81" style="left:479.5px;top:489px;font-size:12px;line-height:16px;color:#292a2e;letter-spacing:0.391px;-webkit-text-stroke:0.28px #292a2e;">Создать интерактивный прототип</div>
<div class="st" style="top:490.6px;width:92.8px;background:#dddee1"></div>
<div class="t" id="t82" style="left:823px;top:490px;font-size:9.5px;line-height:13px;color:#292a2e;font-weight:700;letter-spacing:0.442px;">К ВЫПОЛНЕНИ…</div>
<svg class="ic" style="left:920.4px;top:489.35px;stroke:#6b6e76;stroke-width:1.4;" width="15" height="15" viewBox="0 0 16 16"><path d="M3.5 1.75h9c1 0 1.75.750 1.75 1.75v6.5c0 1-.750 1.75-1.75 1.75H6.25l-3 2.5-1.5 0V3.5c0-1 .750-1.75 1.75-1.75z"/><path d="M4.75 5.25h6.5M4.75 8h4"/></svg>
<div class="abs" style="left:938px;top:485.2px;width:98px;height:24px;overflow:hidden"><div class="t" id="t83" style="left:2.9px;top:4px;font-size:12px;line-height:16px;color:#6b6e76;letter-spacing:0.55px;-webkit-text-stroke:0.28px #6b6e76;">Добавить комментарий</div></div>
<div class="cb" style="left:245px;top:524.4px"></div>
<svg class="abs" style="left:310.3px;top:523.9px" width="12.4" height="12.4" viewBox="0 0 12.4 12.4"><rect x=".75" y=".75" width="10.9" height="10.9" rx="2" fill="#fff" stroke="#4688ec" stroke-width="1.5"/><path d="M3.4 6.3l1.9 1.9 3.6-4" fill="none" stroke="#4688ec" stroke-width="1.3" stroke-linecap="round" stroke-linejoin="round"/></svg>
<div class="t" id="t84" style="left:379.5px;top:522px;font-size:12px;line-height:16px;color:#292a2e;letter-spacing:0.571px;-webkit-text-stroke:0.28px #292a2e;">TSTS-9</div>
<div class="t" id="t85" style="left:479.5px;top:522px;font-size:12px;line-height:16px;color:#292a2e;letter-spacing:0.32px;-webkit-text-stroke:0.28px #292a2e;">Провести тестирование прототипа на пользователях</div>
<div class="st" style="top:524.3px;width:92.8px;background:#dddee1"></div>
<div class="t" id="t86" style="left:823px;top:524px;font-size:9.5px;line-height:13px;color:#292a2e;font-weight:700;letter-spacing:0.442px;">К ВЫПОЛНЕНИ…</div>
<svg class="ic" style="left:920.4px;top:523.1px;stroke:#6b6e76;stroke-width:1.4;" width="15" height="15" viewBox="0 0 16 16"><path d="M3.5 1.75h9c1 0 1.75.750 1.75 1.75v6.5c0 1-.750 1.75-1.75 1.75H6.25l-3 2.5-1.5 0V3.5c0-1 .750-1.75 1.75-1.75z"/><path d="M4.75 5.25h6.5M4.75 8h4"/></svg>
<div class="abs" style="left:938px;top:519px;width:98px;height:24px;overflow:hidden"><div class="t" id="t87" style="left:2.9px;top:4px;font-size:12px;line-height:16px;color:#6b6e76;letter-spacing:0.55px;-webkit-text-stroke:0.28px #6b6e76;">Добавить комментарий</div></div>
<div class="cb" style="left:245px;top:558.1px"></div>
<svg class="abs" style="left:310.3px;top:557.6px" width="12.4" height="12.4" viewBox="0 0 12.4 12.4"><rect x=".75" y=".75" width="10.9" height="10.9" rx="2" fill="#fff" stroke="#4688ec" stroke-width="1.5"/><path d="M3.4 6.3l1.9 1.9 3.6-4" fill="none" stroke="#4688ec" stroke-width="1.3" stroke-linecap="round" stroke-linejoin="round"/></svg>
<div class="t" id="t88" style="left:379.5px;top:556px;font-size:12px;line-height:16px;color:#292a2e;letter-spacing:0.331px;-webkit-text-stroke:0.28px #292a2e;">TSTS-10</div>
<div class="t" id="t89" style="left:479.5px;top:556px;font-size:12px;line-height:16px;color:#292a2e;letter-spacing:0.23px;-webkit-text-stroke:0.28px #292a2e;">Утвердить финальный дизайн</div>
<div class="st" style="top:558px;width:92.8px;background:#dddee1"></div>
<div class="t" id="t90" style="left:823px;top:558px;font-size:9.5px;line-height:13px;color:#292a2e;font-weight:700;letter-spacing:0.442px;">К ВЫПОЛНЕНИ…</div>
<svg class="ic" style="left:920.4px;top:556.85px;stroke:#6b6e76;stroke-width:1.4;" width="15" height="15" viewBox="0 0 16 16"><path d="M3.5 1.75h9c1 0 1.75.750 1.75 1.75v6.5c0 1-.750 1.75-1.75 1.75H6.25l-3 2.5-1.5 0V3.5c0-1 .750-1.75 1.75-1.75z"/><path d="M4.75 5.25h6.5M4.75 8h4"/></svg>
<div class="abs" style="left:938px;top:552.8px;width:98px;height:24px;overflow:hidden"><div class="t" id="t91" style="left:2.9px;top:4px;font-size:12px;line-height:16px;color:#6b6e76;letter-spacing:0.55px;-webkit-text-stroke:0.28px #6b6e76;">Добавить комментарий</div></div>
<svg class="ic" style="left:244.25px;top:590.35px;stroke:#505258;stroke-width:1.5;" width="14.5" height="14.5" viewBox="0 0 16 16"><path d="M8 1.75v12.5M1.75 8h12.5"/></svg>
<div class="t" id="t92" style="left:264.8px;top:590px;font-size:12px;line-height:16px;color:#505258;font-weight:700;letter-spacing:-0.027px;">Создать</div>
<svg class="abs" style="left:0;top:0;pointer-events:none" width="1430" height="809" viewBox="0 0 1430 809"><g transform="translate(17 190.3) scale(.845)" stroke="#505258" stroke-width="1.7" fill="none" stroke-linejoin="round" stroke-linecap="round"><path d="M6.4 5.2 9.3 2.5c1.3-1.2 3.2-1.4 4.7-.7.7 1.5.5 3.4-.7 4.7L10.6 9.4"/><path d="M6.4 5.2H3.2L1.6 6.8l2.7 1.3M10.6 9.4v3.2L9 14.2 7.7 11.5M4.3 8.1l3.4 3.4M1.7 14.1 5.2 10.6M5.3 14.1l1-1"/><circle cx="11.2" cy="4.6" r=".5"/></g><g transform="translate(-1340.7 327.5)" stroke="#505258" stroke-width="1.3" fill="none" stroke-linecap="round" stroke-linejoin="round"><path d="M1358.6 156.9h2.2M1365.2 156.9h6M1358.6 162.9h6.3M1369.7 162.9h1.5"/><rect x="1361.1" y="154.2" width="3.3" height="5.4" rx="1.5"/><rect x="1365.6" y="160.2" width="3.3" height="5.4" rx="1.5"/></g><path d="M21.4 786.4h4.3l6.2-1.9c.4-.1.7.1.7.5v8c0 .4-.3.6-.7.5l-6.2-1.9h-4.3c-.3 0-.5-.2-.5-.5v-4.2c0-.3.2-.5.5-.5zM25.7 786.4v5.2M23.3 791.6v2.3c0 .7.5 1.1 1.1 1.1s1.1-.4 1.1-1.1v-2.3" stroke="#505258" stroke-width="1.4" fill="none" stroke-linejoin="round" stroke-linecap="round"/><path d="M1400.8 76.6 1394.5 83.3h5.3l-2.3 5.8 6.3-6.5h-5.4z" stroke="#505258" stroke-width="1.25" fill="none" stroke-linejoin="round"/><g transform="translate(0 0)" stroke="#292a2e" stroke-width="1.3" fill="none" stroke-linecap="round" stroke-linejoin="round"><path d="M1358.6 156.9h2.2M1365.2 156.9h6M1358.6 162.9h6.3M1369.7 162.9h1.5"/><rect x="1361.1" y="154.2" width="3.3" height="5.4" rx="1.5"/><rect x="1365.6" y="160.2" width="3.3" height="5.4" rx="1.5"/></g><g fill="#1c1d20"><circle cx="1393.6" cy="160.3" r="1.25"/><circle cx="1399.2" cy="160.3" r="1.25"/><circle cx="1404.8" cy="160.3" r="1.25"/></g></svg>
</body>
</html>
